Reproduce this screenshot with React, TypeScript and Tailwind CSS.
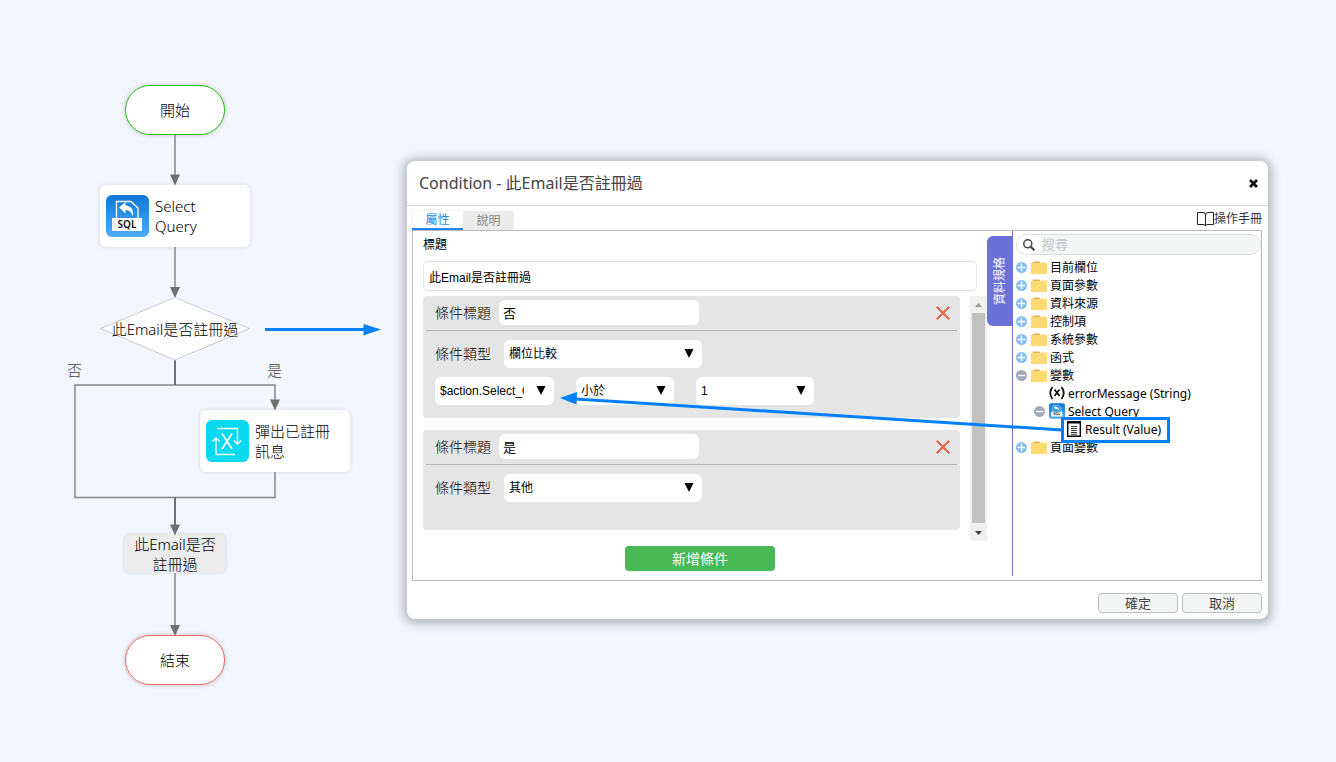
import { useState } from "react";
import type { ReactNode } from "react";

type TreeItem = {
  label: string;
  depth: number;
  toggle?: "plus" | "minus";
  icon: "folder" | "variable" | "sql" | "value";
  active?: boolean;
};

const treeItems: TreeItem[] = [
  { label: "目前欄位", depth: 0, toggle: "plus", icon: "folder" },
  { label: "頁面參數", depth: 0, toggle: "plus", icon: "folder" },
  { label: "資料來源", depth: 0, toggle: "plus", icon: "folder" },
  { label: "控制項", depth: 0, toggle: "plus", icon: "folder" },
  { label: "系統參數", depth: 0, toggle: "plus", icon: "folder" },
  { label: "函式", depth: 0, toggle: "plus", icon: "folder" },
  { label: "變數", depth: 0, toggle: "minus", icon: "folder" },
  { label: "errorMessage (String)", depth: 1, icon: "variable" },
  { label: "Select Query", depth: 1, toggle: "minus", icon: "sql" },
  { label: "Result (Value)", depth: 2, icon: "value", active: true },
  { label: "頁面變數", depth: 0, toggle: "plus", icon: "folder" },
];

const depthPadding = ["pl-0", "pl-[18px]", "pl-9"];

function SqlIcon({ className }: { className: string }) {
  return (
    <svg viewBox="0 0 43 42" className={className} aria-hidden="true">
      <defs>
        <linearGradient id="sqlBg" x1="0" y1="0" x2="0" y2="1">
          <stop offset="0" stopColor="#0c78d4" />
          <stop offset="1" stopColor="#4fabfa" />
        </linearGradient>
      </defs>
      <rect width="43" height="42" rx="6" fill="url(#sqlBg)" />
      <path d="M10.5 24V6.5H25L32 13V24" fill="none" stroke="#fff" strokeWidth="1.3" />
      <path d="M13 12.5 19.500 7v3.500C25 11 28 14.500 27 21.500 25.500 17 23 15 19.500 15v3.500Z" fill="#fff" />
      <rect x="6" y="23" width="30" height="13" fill="#fff" />
      <text
        x="21"
        y="33"
        textAnchor="middle"
        fontSize="10"
        fontWeight="600"
        fontFamily="Noto Sans, sans-serif"
        fill="#111"
      >
        SQL
      </text>
    </svg>
  );
}

function VariableIcon() {
  return (
    <svg viewBox="0 0 43 42" className="h-[42px] w-[43px] shrink-0" aria-hidden="true">
      <rect width="43" height="42" rx="6" fill="#08d8f0" />
      <g fill="none" stroke="#fff" strokeWidth="1.4">
        <path d="M11 8.500H31.500V24M28 20.500l3.500 3.700 3.700-3.700" />
        <path d="M29 34.500H10V18M6.500 21.500 10 18l3.700 3.500" />
        <path d="M16 13.500 26 29M26 13.500 16 29" strokeWidth="1.7" />
      </g>
    </svg>
  );
}

function TreeIcon({ icon }: { icon: TreeItem["icon"] }) {
  if (icon === "sql") return <SqlIcon className="h-[18px] w-4 shrink-0" />;
  if (icon === "variable") {
    return (
      <svg viewBox="0 0 16 14" className="h-[14px] w-4 shrink-0" fill="none" stroke="#111" strokeWidth="1.800" aria-hidden="true">
        <path d="M3.500 1Q-1 7 3.500 13M12.500 1Q17 7 12.500 13M5.500 3.500l5 6.500M10.500 3.500l-5 6.500" />
      </svg>
    );
  }
  if (icon === "value") {
    return (
      <svg viewBox="0 0 14 16" className="h-4 w-[14px] shrink-0" aria-hidden="true">
        <path d="M.7.700h12.600v14.600H.7Z" fill="#fff" stroke="#000" strokeWidth="1.400" />
        <path d="M0 0h14v2.500H0Z" />
        <path d="M4 5.500h6M4 7.500h6M4 9.500h6M4 11.500h6M4 13.300h6" stroke="#000" strokeWidth=".8" />
      </svg>
    );
  }
  return (
    <svg viewBox="0 0 16 13" className="h-[13px] w-4 shrink-0" aria-hidden="true">
      <path d="M1 3 2 .500h6.500L10 3Z" fill="#dfb260" />
      <path d="M0 2h9l1-.500h6V13H0Z" fill="#ffd972" />
    </svg>
  );
}

function Toggle({ type }: { type: "plus" | "minus" }) {
  return (
    <svg viewBox="0 0 11 11" className="h-[11px] w-[11px]" aria-hidden="true">
      <circle cx="5.500" cy="5.500" r="5.500" fill={type === "plus" ? "#85bdf8" : "#a3abb9"} />
      <path d={type === "plus" ? "M1.500 5.500h8M5.500 1.500v8" : "M2 5.500h7"} stroke="#fff" strokeWidth="1.300" />
    </svg>
  );
}

function Edges() {
  return (
    <svg className="absolute inset-0 h-full w-full" aria-hidden="true">
      <g fill="none" stroke="#85878b" strokeWidth="1.500">
        <path d="M175 135v42M175 247v43M175 573v53" />
        <path d="M275 400V385H75v112.500h200V472" />
        <path d="M175 360v25M175 497v30" stroke="#707070" strokeWidth="2" />
      </g>
      <g fill="#707070">
        <path d="M170 174.500h10l-5 11Z" />
        <path d="M170 287h10l-5 11Z" />
        <path d="M270 399.500h10l-5 11Z" />
        <path d="M170 524.500h10l-5 11Z" />
        <path d="M170 625h10l-5 11Z" />
      </g>
      <path d="M175 297.500 249.500 328.500 175 360 100.500 328.500Z" fill="#fff" stroke="#c8cacd" />
      <path d="M265 329.500h100" stroke="#0080ff" strokeWidth="3" />
      <path d="M363.500 324v11.500L381 329.500Z" fill="#0080ff" />
    </svg>
  );
}

function ActionNode({ icon, className, children }: { icon: ReactNode; className: string; children: ReactNode }) {
  return (
    <div
      className={`absolute flex h-[62px] w-[150px] items-center gap-[6px] rounded-md bg-white pl-[6px] shadow-[0_0_4px_rgba(0,0,0,0.15)] ${className}`}
    >
      {icon}
      <span>{children}</span>
    </div>
  );
}

function FlowChart() {
  return (
    <section className="relative min-h-[700px] w-[407px] shrink-0 text-[15px] font-light leading-5 text-black">
      <div className="absolute left-[125px] top-[85px] flex h-[50px] w-[100px] items-center justify-center rounded-full border border-[#23c010] bg-white shadow-[0_0_5px_rgba(0,0,0,0.2)]">
        開始
      </div>
      <ActionNode icon={<SqlIcon className="h-[42px] w-[43px] shrink-0" />} className="left-[100px] top-[185px]">
        Select
        <br />
        Query
      </ActionNode>
      <ActionNode icon={<VariableIcon />} className="left-[200px] top-[410px]">
        彈出已註冊
        <br />
        訊息
      </ActionNode>
      <div className="absolute left-[124px] top-[534px] flex h-[39px] w-[102px] items-center justify-center rounded-md bg-[#ececec] text-center shadow-[0_0_3px_rgba(0,0,0,0.15)]">
        <span>
          此Email是否
          <br />
          註冊過
        </span>
      </div>
      <div className="absolute left-[125px] top-[635px] flex h-[50px] w-[100px] items-center justify-center rounded-full border border-[#f0695c] bg-white shadow-[0_0_5px_rgba(0,0,0,0.2)]">
        結束
      </div>
      <Edges />
      <span className="absolute left-[100px] top-[319px] w-[150px] whitespace-nowrap text-center">此Email是否註冊過</span>
      <span className="absolute left-[67px] top-[360px] text-[#444]">否</span>
      <span className="absolute left-[267px] top-[360px] text-[#444]">是</span>
    </section>
  );
}

function SelectBox({ label, id, options, className }: { label?: string; id?: string; options: string[]; className: string }) {
  return (
    <div className={`relative ${className}`}>
      <select
        id={id}
        aria-label={label}
        className="block h-7 w-full appearance-none rounded-md bg-white pl-[5px] pr-[30px] font-['Liberation_Sans','Noto_Sans_CJK_TC',sans-serif] text-xs font-normal text-black"
      >
        {options.map((option) => (
          <option key={option}>{option}</option>
        ))}
      </select>
      <svg viewBox="0 0 10 9" className="pointer-events-none absolute right-2 top-[9px] h-[9px] w-[10px]" aria-hidden="true">
        <path d="M.5 0h9L5 9Z" />
      </svg>
    </div>
  );
}

function ConditionCard({ id, title, type, children }: { id: string; title: string; type: string; children?: ReactNode }) {
  return (
    <div className="rounded bg-[#e5e5e5] px-[3px] pb-[13px] pt-1 text-sm text-black">
      <div className="flex items-center border-b border-[#b5b5b5] pb-[5px] pl-[9px] pr-[7px]">
        <label htmlFor={`${id}-title`} className="w-16">
          條件標題
        </label>
        <input
          id={`${id}-title`}
          defaultValue={title}
          className="h-[25px] w-[200px] rounded-md bg-white px-1 text-[13px] font-normal text-black outline-none"
        />
        <button aria-label="刪除條件" className="ml-auto">
          <svg viewBox="0 0 14 14" className="h-[14px] w-[14px]" aria-hidden="true">
            <path d="M.7.700 13.300 13.300M13.300.700.7 13.300" stroke="#e66a4e" strokeWidth="2.200" />
          </svg>
        </button>
      </div>
      <div className="flex items-center pl-[9px] pt-[9px]">
        <label htmlFor={`${id}-type`} className="w-[69px]">
          條件類型
        </label>
        <SelectBox id={`${id}-type`} options={[type]} className="w-[198px]" />
      </div>
      {children}
    </div>
  );
}

function ScrollBar() {
  return (
    <div className="flex w-[17px] flex-col items-center bg-[#f0f0f1]">
      <svg viewBox="0 0 17 17" className="h-[17px] w-[17px]" aria-hidden="true">
        <path d="M5 11 8.500 7l3.500 4Z" fill="#999" />
      </svg>
      <div className="w-[13px] flex-1 bg-[#c0c1c1]" />
      <svg viewBox="0 0 17 17" className="mt-px h-[17px] w-[17px]" aria-hidden="true">
        <path d="M5 7h7l-3.500 4Z" fill="#444" />
      </svg>
    </div>
  );
}

function ConditionForm() {
  return (
    <form className="min-w-0 flex-1 pb-[9px] pl-[10px] pt-[5px] font-light" onSubmit={(e) => e.preventDefault()}>
      <div className="mr-[10px]">
        <label htmlFor="title" className="block pt-px text-xs font-normal text-black">
          標題
        </label>
        <input
          id="title"
          defaultValue="此Email是否註冊過"
          className="mt-2 block h-[30px] w-full rounded border border-[#e3e3e3] px-[5px] font-['Liberation_Sans','Noto_Sans_CJK_TC',sans-serif] text-xs font-normal text-black outline-none"
        />
      </div>
      <div className="mt-[5px] flex gap-[10px]">
        <div className="flex min-w-0 flex-1 flex-col gap-3 pb-[11px]">
          <ConditionCard id="no" title="否" type="欄位比較">
            <div className="flex gap-[22px] pl-[9px] pt-[9px]">
              <SelectBox label="欄位" options={["$action.Select_Query.Result"]} className="w-[119px]" />
              <SelectBox label="運算子" options={["小於"]} className="w-[98px]" />
              <SelectBox label="比較值" options={["1"]} className="w-[118px]" />
            </div>
          </ConditionCard>
          <ConditionCard id="yes" title="是" type="其他">
            <div className="h-[15px]" />
          </ConditionCard>
        </div>
        <ScrollBar />
      </div>
      <div className="mr-[10px] mt-[5px] flex justify-center">
        <button className="h-[25px] w-[150px] rounded bg-[#48b955] text-sm font-normal text-white">新增條件</button>
      </div>
    </form>
  );
}

function DataPanel() {
  return (
    <aside className="mb-1 w-[249px] shrink-0 border-l border-l-[#6b71d6] pl-[3px] pt-[3px]">
      <div className="flex h-[21px] items-center overflow-hidden rounded-full border border-[#dcdfe0] bg-[#f4f6f6]">
        <span className="flex h-full w-[23px] items-center justify-center bg-white">
          <svg viewBox="0 0 12 12" className="h-3 w-3" fill="none" stroke="#444" aria-hidden="true">
            <circle cx="4.800" cy="4.800" r="4" strokeWidth="1.500" />
            <path d="m7.800 7.800 3.600 3.600" strokeWidth="2" />
          </svg>
        </span>
        <input
          aria-label="搜尋"
          placeholder="搜尋"
          className="min-w-0 flex-1 bg-transparent px-[2px] text-[13px] outline-none placeholder:text-[#c3c6ca]"
        />
      </div>
      <ul className="mt-[3px] text-xs leading-[18px] text-black">
        {treeItems.map((item) => (
          <li key={item.label} className={`flex h-[18px] items-center ${depthPadding[item.depth]}`}>
            <span className="w-[15px] shrink-0">{item.toggle && <Toggle type={item.toggle} />}</span>
            {item.active ? (
              <span className="relative flex items-center gap-1">
                <span className="absolute -bottom-1 -left-[6px] -right-[9px] -top-[3px] border-[3px] border-[#0080ff] bg-white" />
                <span className="relative">
                  <TreeIcon icon={item.icon} />
                </span>
                <span className="relative pt-px">{item.label}</span>
              </span>
            ) : (
              <span className="flex items-center gap-[3px]">
                <TreeIcon icon={item.icon} />
                <span className="pt-px">{item.label}</span>
              </span>
            )}
          </li>
        ))}
      </ul>
    </aside>
  );
}

function ConditionDialog() {
  const [tab, setTab] = useState("屬性");

  return (
    <section
      role="dialog"
      aria-label="Condition"
      className="relative mr-[68px] mt-[161px] min-w-[780px] flex-1 self-start rounded-lg bg-white pb-[6px] shadow-[0_1px_10px_4px_rgba(0,0,0,0.25)]"
    >
      <header className="flex h-[45px] items-center justify-between border-b border-[#d8d8d8] pl-3 pr-[10px]">
        <h1 className="text-base font-normal text-[#444]">Condition - 此Email是否註冊過</h1>
        <button aria-label="關閉">
          <svg viewBox="0 0 9 9" className="h-[9px] w-[9px]" aria-hidden="true">
            <path d="m1 1 7 7M8 1 1 8" stroke="#111" strokeWidth="2.800" />
          </svg>
        </button>
      </header>
      <div className="pl-[5px] pr-[6px] pt-[5px]">
        <div className="flex items-start justify-between text-xs">
          <div className="flex">
            {["屬性", "說明"].map((name) => (
              <button
                key={name}
                onClick={() => setTab(name)}
                className={`h-[19px] w-[51px] pt-px ${
                  tab === name
                    ? "border-b-2 border-[#1e88f0] bg-white text-[#1e88f0] shadow-[0_0_1px_#bbb]"
                    : "bg-[#ebebeb] text-[#888]"
                }`}
              >
                {name}
              </button>
            ))}
          </div>
          <a href="#" className="flex items-center text-[#333]">
            <svg viewBox="0 0 17 15" className="h-[15px] w-[17px]" fill="none" stroke="#222" aria-hidden="true">
              <path d="M.5.500H6Q8.500.500 8.500 3 8.500.500 11 .500h5.500v12H11q-2 0-2.500 1.500Q8 12.500 6 12.500H.500ZM8.500 3v11" />
            </svg>
            操作手冊
          </a>
        </div>
        <div className="flex border border-[#bbb]">
          <ConditionForm />
          <button className="mt-[5px] flex h-[90px] w-[25px] shrink-0 items-center justify-center rounded-l-md bg-[#6b71d6] text-xs text-white">
            <span className="-rotate-90 whitespace-nowrap">資料規格</span>
          </button>
          <DataPanel />
        </div>
        <footer className="mt-3 flex justify-end gap-1 text-[13px] text-[#444]">
          <button className="h-5 w-20 rounded border border-[#bbbec0] bg-[#f4f6f6] leading-[18px]">確定</button>
          <button className="h-5 w-20 rounded border border-[#bbbec0] bg-[#f4f6f6] leading-[18px]">取消</button>
        </footer>
      </div>
      {/* link from the Result variable to the compared field */}
      <div className="pointer-events-none absolute left-[153px] right-[206px] top-[231px] h-10">
        <svg className="h-full w-full" aria-hidden="true">
          <line x1="16" y1="7" x2="100%" y2="38" stroke="#0080ff" strokeWidth="3" />
          <path d="M0 6 17 0 16.500 12.500Z" fill="#0080ff" />
        </svg>
      </div>
    </section>
  );
}

export default function App() {
  return (
    <main className="flex min-h-screen bg-[#f3f6fd] font-['Noto_Sans','Noto_Sans_CJK_TC',sans-serif]">
      <FlowChart />
      <ConditionDialog />
    </main>
  );
}
